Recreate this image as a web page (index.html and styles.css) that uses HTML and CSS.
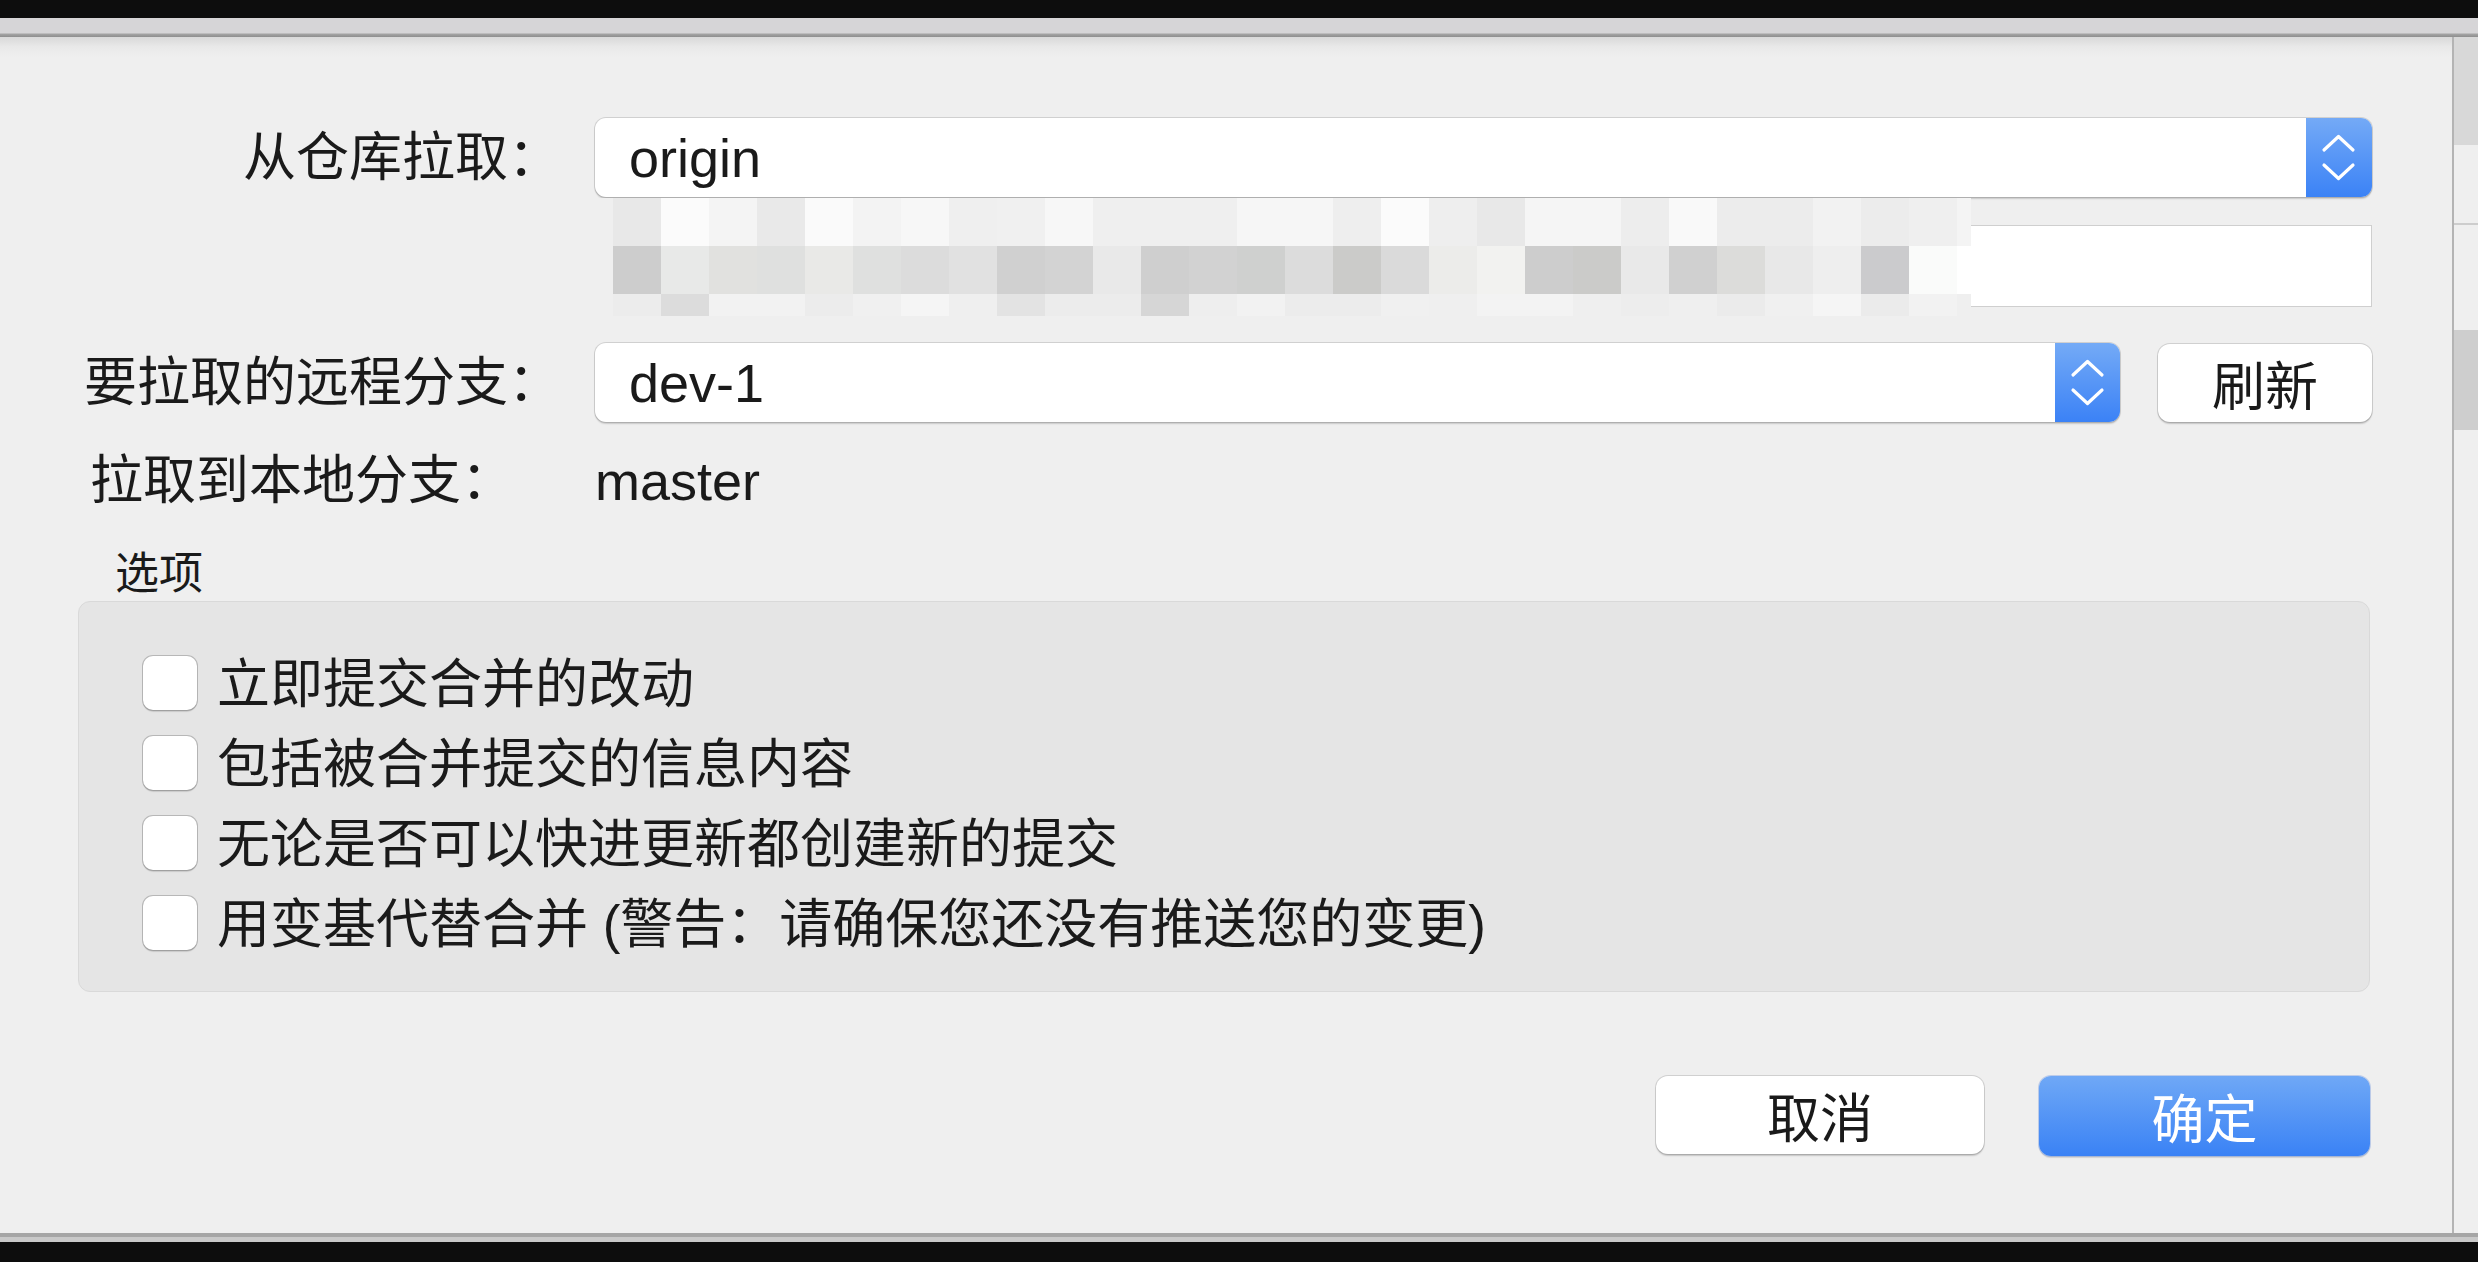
FILE: index.html
```html
<!DOCTYPE html>
<html lang="zh-CN">
<head>
<meta charset="utf-8">
<title>拉取</title>
<link rel="stylesheet" href="styles.css">
</head>
<body>
<div class="screen">
  <div class="topbar"></div>
  <div class="band"></div>
  <div class="middle">
    <div class="dialog">
      <div class="form">
        <div class="label">从仓库拉取：</div>
        <div class="combo">
          <span class="value">origin</span>
          <span class="stepper">
            <svg width="66" height="79" viewBox="0 0 66 79"><path d="M18 32 L32.5 18.5 L47 32 M18 47 L32.5 60.5 L47 47" fill="none" stroke="#fff" stroke-width="3.2" stroke-linecap="round" stroke-linejoin="round"/></svg>
          </span>
        </div>
        <div class="label"></div>
        <div class="field-wrap">
          <div class="field"></div>
          <div class="mosaic">
            <span style="background:#efefef"></span><span style="background:#e8e8e8"></span><span style="background:#fbfbfb"></span><span style="background:#f4f4f4"></span><span style="background:#e9e9e9"></span><span style="background:#fafafa"></span><span style="background:#f3f3f3"></span><span style="background:#f7f7f7"></span><span style="background:#efefef"></span><span style="background:#f0f0f0"></span><span style="background:#f7f7f7"></span><span style="background:#efefef"></span><span style="background:#efefef"></span><span style="background:#efefef"></span><span style="background:#f6f6f6"></span><span style="background:#f6f6f6"></span><span style="background:#eeeeee"></span><span style="background:#fbfbfb"></span><span style="background:#eeeeee"></span><span style="background:#e8e8e8"></span><span style="background:#f5f5f5"></span><span style="background:#f5f5f5"></span><span style="background:#ededed"></span><span style="background:#f9f9f9"></span><span style="background:#ececec"></span><span style="background:#ececec"></span><span style="background:#f2f2f2"></span><span style="background:#ececec"></span><span style="background:#efefef"></span><span style="background:#f4f4f4"></span>
            <span style="background:#efefef"></span><span style="background:#cdcdcd"></span><span style="background:#e8e9e8"></span><span style="background:#e1e1df"></span><span style="background:#dfe0df"></span><span style="background:#e9e9e7"></span><span style="background:#dfe0df"></span><span style="background:#dcdcdc"></span><span style="background:#e1e1e1"></span><span style="background:#d0d0d0"></span><span style="background:#d3d3d3"></span><span style="background:#e9e9e9"></span><span style="background:#cfcfcf"></span><span style="background:#d2d2d2"></span><span style="background:#cfd0cf"></span><span style="background:#dcdcdc"></span><span style="background:#cbcbc9"></span><span style="background:#dadada"></span><span style="background:#ececea"></span><span style="background:#f2f2f0"></span><span style="background:#cdcdcd"></span><span style="background:#cbcbc9"></span><span style="background:#e9e9e9"></span><span style="background:#d0d0d0"></span><span style="background:#dcdcda"></span><span style="background:#e8e8e8"></span><span style="background:#eeeeee"></span><span style="background:#cbcbcd"></span><span style="background:#fafbfa"></span><span style="background:#ffffff"></span>
            <span style="background:#efefef"></span><span style="background:#ececec"></span><span style="background:#dcdcdc"></span><span style="background:#f2f2f2"></span><span style="background:#f2f2f2"></span><span style="background:#ececec"></span><span style="background:#f0f0f0"></span><span style="background:#f5f5f5"></span><span style="background:#efefef"></span><span style="background:#e3e3e3"></span><span style="background:#ececec"></span><span style="background:#ececec"></span><span style="background:#d6d6d6"></span><span style="background:#eeeeee"></span><span style="background:#f2f2f2"></span><span style="background:#ececec"></span><span style="background:#ececec"></span><span style="background:#f0f0f0"></span><span style="background:#efefef"></span><span style="background:#f3f3f3"></span><span style="background:#f3f3f3"></span><span style="background:#efefef"></span><span style="background:#ededed"></span><span style="background:#efefef"></span><span style="background:#ebebeb"></span><span style="background:#f0f0f0"></span><span style="background:#f5f5f5"></span><span style="background:#ebebeb"></span><span style="background:#f2f2f2"></span><span style="background:#efefef"></span>
          </div>
        </div>
        <div class="label">要拉取的远程分支：</div>
        <div class="combo-row">
          <div class="combo grow">
            <span class="value">dev-1</span>
            <span class="stepper small">
              <svg width="65" height="79" viewBox="0 0 65 79"><path d="M18 32 L32.5 18.5 L47 32 M18 47 L32.5 60.5 L47 47" fill="none" stroke="#fff" stroke-width="3.2" stroke-linecap="round" stroke-linejoin="round"/></svg>
            </span>
          </div>
          <button class="btn refresh">刷新</button>
        </div>
        <div class="label left">拉取到本地分支：</div>
        <div class="plain">master</div>
      </div>

      <div class="options-title">选项</div>
      <div class="group">
        <label class="check"><span class="box"></span><span class="text">立即提交合并的改动</span></label>
        <label class="check"><span class="box"></span><span class="text">包括被合并提交的信息内容</span></label>
        <label class="check"><span class="box"></span><span class="text">无论是否可以快进更新都创建新的提交</span></label>
        <label class="check"><span class="box"></span><span class="text">用变基代替合并 (警告：请确保您还没有推送您的变更)</span></label>
      </div>

      <div class="actions">
        <button class="btn cancel">取消</button>
        <button class="btn primary">确定</button>
      </div>
    </div>
    <div class="side">
      <div class="s1"></div>
      <div class="s2"></div>
      <div class="s3"></div>
      <div class="s4"></div>
      <div class="s5"></div>
    </div>
  </div>
  <div class="bottom-edge"></div>
  <div class="bottombar"></div>
</div>
</body>
</html>
```

FILE: styles.css
```css
* { box-sizing: border-box; }

html, body {
  margin: 0;
  padding: 0;
  background: #0d0d0d;
}

body {
  font-family: "Liberation Sans", "Noto Sans CJK SC", sans-serif;
  color: #1a1a1a;
}

.screen {
  width: 2478px;
  height: 1262px;
  display: flex;
  flex-direction: column;
  overflow: hidden;
}

.topbar {
  height: 18px;
  background: #0d0d0d;
}

.band {
  height: 19px;
  background: linear-gradient(#d6d5d7 0, #d6d5d7 15px, #a4a4a4 16px, #8e8e8e 19px);
}

.middle {
  height: 1196px;
  display: flex;
}

.dialog {
  width: 2454px;
  height: 1196px;
  background: linear-gradient(#d9d9d9 0, #e9e9e9 10px, #efefef 20px, #efefef 100%);
  border-right: 2px solid #b4b4b4;
  padding: 81px 82px 0 0;
  display: flex;
  flex-direction: column;
}

/* form */
.form {
  display: grid;
  grid-template-columns: 561px 1777px;
  column-gap: 34px;
  align-items: center;
}

.label {
  font-size: 53px;
  text-align: right;
  white-space: nowrap;
  line-height: 60px;
  padding-left: 0;
}

.label.left {
  text-align: left;
  padding-left: 90px;
  margin-top: 29px;
}

.combo {
  height: 79px;
  display: flex;
  background: #fff;
  border-radius: 11px;
  box-shadow: 0 0 0 1px rgba(0, 0, 0, 0.13), 0 2px 1.5px rgba(0, 0, 0, 0.16);
  overflow: hidden;
}

.combo .value {
  flex: 1;
  display: flex;
  align-items: center;
  padding-left: 34px;
  font-size: 54px;
  color: #1a1a1a;
}

.stepper {
  width: 66px;
  height: 79px;
  background: linear-gradient(#74aaf6, #3b82f6);
  display: flex;
}

.stepper.small { width: 65px; }

.field-wrap {
  position: relative;
  height: 82px;
  margin-top: 28px;
}

.field {
  height: 82px;
  background: #fff;
  border: 1px solid #cfcfcf;
}

.mosaic {
  position: absolute;
  left: -30px;
  top: -27px;
  display: grid;
  grid-template-columns: repeat(29, 48px) 14px;
  grid-template-rows: 48px 48px 22px;
}

.mosaic span { display: block; }

.combo-row {
  display: flex;
  align-items: center;
  gap: 38px;
  margin-top: 36px;
}

.form > .label:nth-child(5) { margin-top: 36px; }

.combo.grow { flex: 1; }

.btn {
  font-family: "Liberation Sans", "Noto Sans CJK SC", sans-serif;
  font-size: 53px;
  color: #1a1a1a;
  background: #fff;
  border: none;
  border-radius: 12px;
  box-shadow: 0 0 0 1px rgba(0, 0, 0, 0.13), 0 2px 1.5px rgba(0, 0, 0, 0.18);
  padding: 0;
  display: flex;
  align-items: center;
  justify-content: center;
}

.btn.refresh {
  width: 214px;
  height: 78px;
}

.plain {
  font-size: 54px;
  line-height: 60px;
  margin-top: 29px;
}

/* options */
.options-title {
  font-size: 44px;
  line-height: 50px;
  margin: 38px 0 0 115px;
}

.group {
  margin: 2px 0 0 78px;
  height: 391px;
  background: #e5e5e5;
  border: 1px solid #d9d9d9;
  border-radius: 12px;
  padding: 54px 0 0 64px;
  display: flex;
  flex-direction: column;
  gap: 26px;
}

.check {
  display: flex;
  align-items: center;
  height: 54px;
  gap: 20px;
}

.box {
  width: 54px;
  height: 54px;
  flex: none;
  background: #fff;
  border-radius: 10px;
  box-shadow: 0 0 0 1px rgba(0, 0, 0, 0.2), 0 1.5px 1px rgba(0, 0, 0, 0.12);
}

.text {
  font-size: 53px;
  line-height: 60px;
  padding-top: 4px;
  white-space: nowrap;
}

/* actions */
.actions {
  display: flex;
  justify-content: flex-end;
  gap: 55px;
  margin-top: 84px;
}

.btn.cancel {
  width: 328px;
  height: 78px;
}

.btn.primary {
  width: 331px;
  height: 80px;
  color: #fff;
  background: linear-gradient(#6fa8f6, #3a82f5);
  box-shadow: 0 0 0 1px rgba(40, 100, 220, 0.25), 0 1.5px 1px rgba(0, 0, 0, 0.12);
}

/* background window strip at the right */
.side {
  width: 24px;
  display: flex;
  flex-direction: column;
}

.side .s1 { height: 108px; background: #d8d8d8; }
.side .s2 { height: 80px; background: #efefef; border-bottom: 2px solid #cdcdcd; }
.side .s3 { height: 105px; background: #efefef; }
.side .s4 { height: 100px; background: #cecece; }
.side .s5 { flex: 1; background: #efefef; }

.bottom-edge {
  height: 9px;
  background: linear-gradient(#a6a6a6 0, #a6a6a6 4px, #c9c9c9 4px, #c9c9c9 9px);
}

.bottombar {
  flex: 1;
  background: #0d0d0d;
}
```
